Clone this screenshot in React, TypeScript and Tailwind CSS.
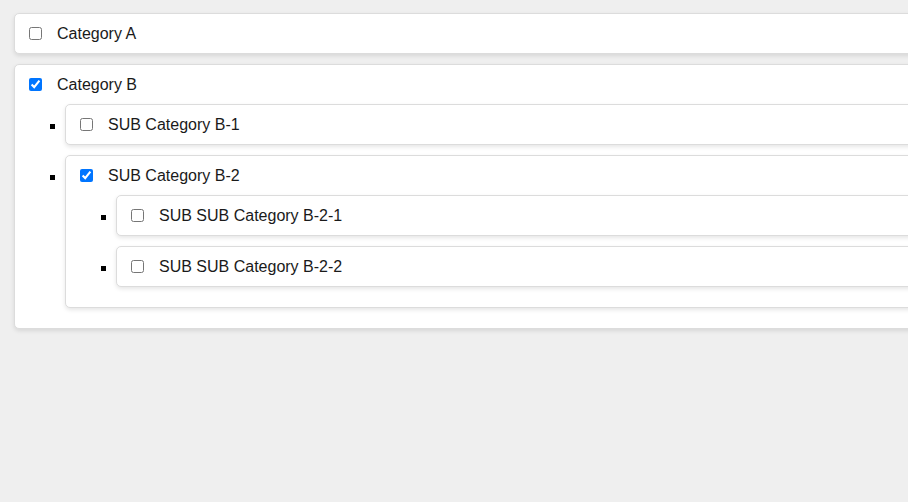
import React from "react";

type Node = { label: string; checked: boolean; children?: Node[] };

const data: Node[] = [
  { label: "Category A", checked: false },
  {
    label: "Category B",
    checked: true,
    children: [
      { label: "SUB Category B-1", checked: false },
      {
        label: "SUB Category B-2",
        checked: true,
        children: [
          { label: "SUB SUB Category B-2-1", checked: false },
          { label: "SUB SUB Category B-2-2", checked: false },
        ],
      },
    ],
  },
];

function Box({ node }: { node: Node }) {
  return (
    <div className="box-content w-full shrink-0 rounded-[5px] border border-[#dcdcdc] bg-white p-[10px] shadow-[0_2px_4px_rgba(0,0,0,0.1)]">
      <label className="flex h-[19px] items-center">
        <input
          type="checkbox"
          defaultChecked={node.checked}
          className="m-0 ml-[4px] h-[13px] w-[13px] shrink-0"
        />
        <span className="ml-[15px] text-[16px] leading-[19px] text-[#1a1a1a]">{node.label}</span>
      </label>
      {node.children && (
        <ul className="my-[10px] flex list-none flex-col gap-[10px] pl-[25px]">
          {node.children.map((c, i) => (
            <li key={i} className="flex items-start">
              <span className="mr-[10px] mt-[20px] h-[5px] w-[5px] shrink-0 bg-black" />
              <Box node={c} />
            </li>
          ))}
        </ul>
      )}
    </div>
  );
}

export default function App() {
  return (
    <div
      className="min-h-screen w-full overflow-hidden bg-[#efefef] pl-[14px] pt-[13px] text-[#1a1a1a]"
      style={{ fontFamily: '"Liberation Sans", Arial, sans-serif' }}
    >
      <div className="flex w-full flex-col gap-[10px]">
        {data.map((n, i) => (
          <Box key={i} node={n} />
        ))}
      </div>
    </div>
  );
}
